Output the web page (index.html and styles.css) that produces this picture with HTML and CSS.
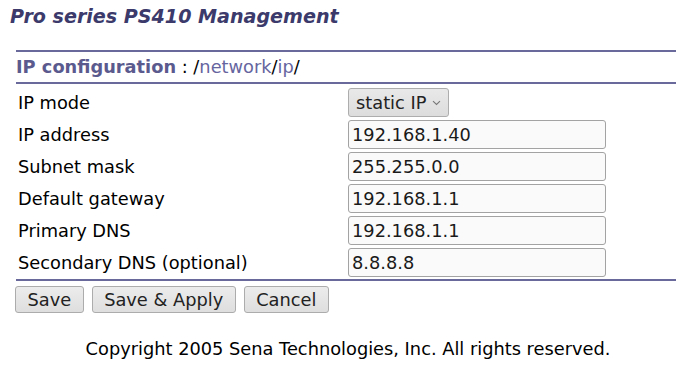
FILE: index.html
```html
<!DOCTYPE html>
<html>
<head>
<meta charset="utf-8">
<link rel="stylesheet" href="styles.css">
</head>
<body>
<h1 class="title">Pro series PS410 Management</h1>
<div class="panel">
  <div class="panel-head"><span class="head-label">IP configuration</span> : /<a class="path">network</a>/<a class="path">ip</a>/</div>
  <div class="form">
    <div class="row"><div class="label">IP mode</div><div class="field"><span class="select">static IP <svg class="caret" width="9" height="6" viewBox="0 0 9 6"><path d="M1 1.2 L4.5 4.5 L8 1.2" fill="none" stroke="#777" stroke-width="1.1"/></svg></span></div></div>
    <div class="row"><div class="label">IP address</div><div class="field"><span class="input">192.168.1.40</span></div></div>
    <div class="row"><div class="label">Subnet mask</div><div class="field"><span class="input">255.255.0.0</span></div></div>
    <div class="row"><div class="label">Default gateway</div><div class="field"><span class="input">192.168.1.1</span></div></div>
    <div class="row"><div class="label">Primary DNS</div><div class="field"><span class="input">192.168.1.1</span></div></div>
    <div class="row"><div class="label">Secondary DNS (optional)</div><div class="field"><span class="input">8.8.8.8</span></div></div>
  </div>
</div>
<div class="buttons">
  <span class="btn">Save</span>
  <span class="btn">Save &amp; Apply</span>
  <span class="btn">Cancel</span>
</div>
<p class="copyright">Copyright 2005 Sena Technologies, Inc. All rights reserved.</p>
</body>
</html>
```

FILE: styles.css
```css
html, body {
  margin: 0;
  padding: 0;
  background: #ffffff;
}
body {
  font-family: "DejaVu Sans", sans-serif;
  font-size: 17.8px;
  color: #000;
}
.title {
  margin: 0;
  padding: 6px 0 0 10px;
  height: 38px;
  box-sizing: border-box;
  font-size: 19.1px;
  line-height: 22px;
  font-weight: bold;
  font-style: italic;
  color: #3b3a6b;
}
.panel {
  margin: 12px 0 0 16px;
  width: 660px;
  border-top: 2px solid #6a699c;
  border-bottom: 2px solid #6a699c;
}
.panel-head {
  height: 30px;
  line-height: 30px;
  border-bottom: 2px solid #6a699c;
}
.head-label {
  font-weight: bold;
  color: #5b5a8e;
}
.path {
  color: #6665a0;
  text-decoration: none;
}
.form {
  padding: 2px 0 1px;
}
.row {
  display: grid;
  grid-template-columns: 332px 1fr;
  height: 32px;
  align-items: center;
}
.label {
  padding-left: 2px;
}
.select {
  display: inline-flex;
  align-items: center;
  gap: 6px;
  height: 29px;
  box-sizing: border-box;
  padding: 0 7px;
  border: 1px solid #adadad;
  border-radius: 3px;
  background: linear-gradient(#e9e9e9, #dcdcdc);
  color: #222;
}
.caret {
  display: block;
  margin-top: 2px;
}
.input {
  display: flex;
  align-items: center;
  width: 258px;
  height: 29px;
  box-sizing: border-box;
  padding-left: 3px;
  border: 1px solid #a3a3a3;
  border-radius: 3px;
  background: #fafafa;
  color: #1a1a1a;
}
.buttons {
  display: flex;
  gap: 8px;
  margin: 5px 0 0 15px;
}
.btn {
  display: inline-flex;
  align-items: center;
  height: 27px;
  box-sizing: border-box;
  padding: 0 11.5px;
  border: 1px solid #acacac;
  border-radius: 3px;
  background: linear-gradient(#ececec, #dedede);
  color: #222;
}
.copyright {
  margin: 26px 0 0;
  text-align: center;
  line-height: 20px;
  color: #000;
}
```
